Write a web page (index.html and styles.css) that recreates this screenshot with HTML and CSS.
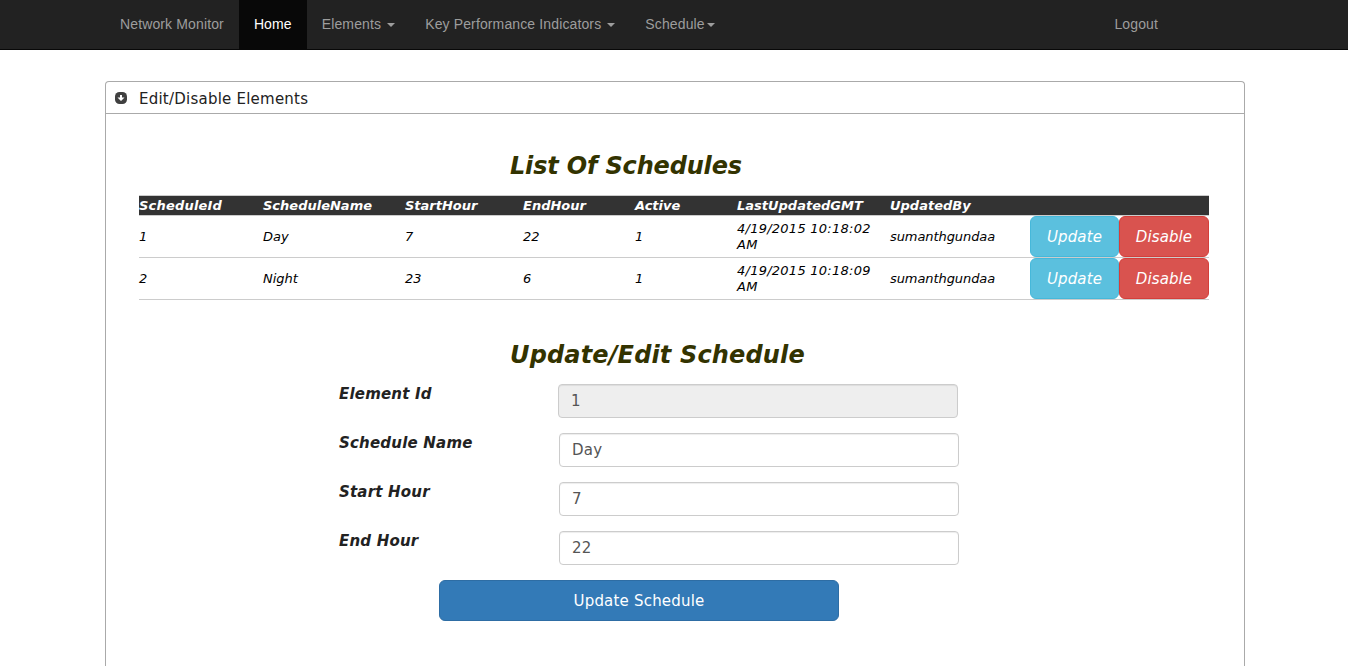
FILE: index.html
```html
<!DOCTYPE html>
<html lang="en">
<head>
<meta charset="utf-8">
<title>Network Monitor</title>
<link rel="stylesheet" href="styles.css">
</head>
<body>
<nav class="navbar">
  <div class="navbar-inner">
    <a class="nav-link" href="#">Network Monitor</a>
    <a class="nav-link active" href="#">Home</a>
    <a class="nav-link" href="#">Elements <b class="caret"></b></a>
    <a class="nav-link" href="#">Key Performance Indicators <b class="caret"></b></a>
    <a class="nav-link" href="#">Schedule<b class="caret"></b></a>
    <a class="nav-link logout" href="#">Logout</a>
  </div>
</nav>
<main class="panel">
  <header class="panel-head">
    <svg class="toggle" width="12" height="12" viewBox="0 0 12 12"><rect width="12" height="12" rx="4.5" fill="#404040"/><path d="M5 3h2v2.5h2.5L6 9 2.5 5.5H5z" fill="#fff"/></svg>
    <span class="panel-title">Edit/Disable Elements</span>
  </header>
  <section class="content">
    <h2 class="heading list-heading">List Of Schedules</h2>
    <table class="grid">
      <colgroup><col class="c-id"><col class="c-name"><col class="c-start"><col class="c-end"><col class="c-active"><col class="c-date"><col class="c-user"><col class="c-update"><col class="c-disable"></colgroup>
      <thead><tr><th class="id-head">ScheduleId</th><th>ScheduleName</th><th>StartHour</th><th>EndHour</th><th>Active</th><th>LastUpdatedGMT</th><th>UpdatedBy</th><th></th><th></th></tr></thead>
      <tbody>
        <tr><td>1</td><td>Day</td><td>7</td><td>22</td><td>1</td><td class="date">4/19/2015 10:18:02<br>AM</td><td class="user">sumanthgundaa</td><td><button class="btn info">Update</button></td><td><button class="btn danger">Disable</button></td></tr>
        <tr><td>2</td><td>Night</td><td>23</td><td>6</td><td>1</td><td class="date">4/19/2015 10:18:09<br>AM</td><td class="user">sumanthgundaa</td><td><button class="btn info">Update</button></td><td><button class="btn danger">Disable</button></td></tr>
      </tbody>
    </table>
    <h2 class="heading edit-heading">Update/Edit Schedule</h2>
    <form class="form">
      <div class="row readonly"><label class="label">Element Id</label><input class="field" value="1" readonly></div>
      <div class="row"><label class="label">Schedule Name</label><input class="field" value="Day"></div>
      <div class="row"><label class="label">Start Hour</label><input class="field" value="7"></div>
      <div class="row"><label class="label">End Hour</label><input class="field" value="22"></div>
      <button class="btn primary" type="button">Update Schedule</button>
    </form>
  </section>
</main>
</body>
</html>
```
FILE: styles.css
```css
* { box-sizing: border-box; }
body { margin: 0; background: #fff; color: #222; font-family: Verdana, "DejaVu Sans", sans-serif; }
.navbar { height: 50px; background: #222; border-bottom: 1px solid #080808; }
.navbar-inner { display: flex; width: 1138px; margin-left: 105px; }
.nav-link { height: 49px; padding: 14px 15px 15px; color: #9d9d9d; font: 14px/20px "Liberation Sans", Arial, sans-serif; letter-spacing: .13px; text-decoration: none; white-space: nowrap; }
.nav-link.active { background: #080808; color: #fff; }
.logout { margin-left: auto; margin-right: 70px; }
.caret { display: inline-block; margin-left: 2px; vertical-align: middle; border-top: 4px solid; border-left: 4px solid transparent; border-right: 4px solid transparent; }
.panel { width: 1140px; height: 585px; margin: 31px 0 0 105px; border: 1px solid #aaa; border-bottom: 0; border-radius: 4px 4px 0 0; }
.panel-head { display: flex; align-items: center; height: 32px; padding-left: 9px; gap: 12px; border-bottom: 1px solid #aaa; }
.panel-title { font-size: 15px; letter-spacing: .23px; line-height: 20px; padding-top: 2px; }
.content { padding: 37px 35px 0 33px; }
.heading { margin: 0 0 13px 371px; color: #330; font-size: 24px; line-height: 31px; font-style: italic; font-weight: bold; white-space: nowrap; }
.list-heading { letter-spacing: -.17px; }
.grid { width: 1070px; table-layout: fixed; border-collapse: collapse; color: #000; font-size: 13px; font-style: italic; line-height: 16px; text-align: left; }
.grid th, .grid td { padding: 0; white-space: nowrap; }
.grid thead tr { height: 20px; background: #333; color: #fff; border-top: 1px solid #ccc; }
.grid tbody tr { height: 42px; border-top: 1px solid #ccc; border-bottom: 1px solid #ccc; }
.grid .id-head { letter-spacing: .2px; }
.grid .date { letter-spacing: .25px; }
.grid .user { letter-spacing: -.08px; }
.c-id { width: 124px; } .c-name { width: 142px; } .c-start { width: 118px; } .c-end { width: 112px; } .c-active { width: 102px; }
.c-date { width: 153px; } .c-user { width: 140px; } .c-update { width: 89px; } .c-disable { width: 90px; }
.btn { display: block; width: 100%; height: 41px; padding: 0; border: 1px solid; border-radius: 6px; color: #fff; font: italic 15px/20px Verdana, "DejaVu Sans", sans-serif; letter-spacing: .1px; }
.info { background: #5bc0de; border-color: #46b8da; }
.danger { background: #d9534f; border-color: #d43f3a; }
.edit-heading { margin-top: 40px; letter-spacing: .15px; }
.form { margin-left: 200px; width: 620px; }
.row { display: flex; height: 34px; margin-bottom: 15px; }
.label { width: 220px; font-size: 15px; line-height: 21px; font-weight: bold; font-style: italic; letter-spacing: .2px; }
.field { width: 400px; height: 34px; padding: 6px 12px; border: 1px solid #ccc; border-radius: 4px; color: #555; background: #fff; box-shadow: inset 0 1px 1px rgba(0,0,0,.075); font: 15px/20px Verdana, "DejaVu Sans", sans-serif; letter-spacing: .2px; }
.readonly .label { width: 219px; }
.readonly .field { background: #eee; }
.primary { width: 400px; margin-left: 100px; background: #337ab7; border-color: #2e6da4; font-style: normal; letter-spacing: .2px; }
```
